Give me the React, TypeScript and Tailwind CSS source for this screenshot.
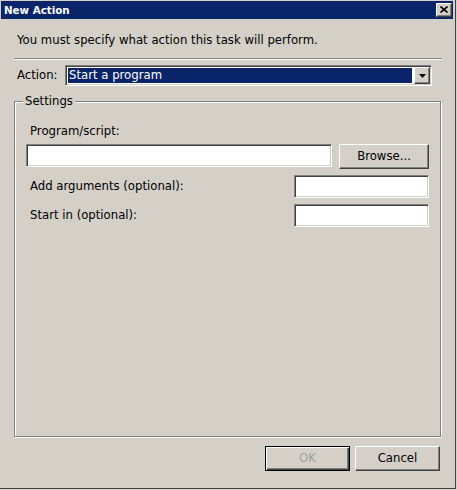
import React from 'react'

// classic win2k-style 3d edges
const raised = "border border-t-white border-l-white border-b-[#404040] border-r-[#404040] shadow-[inset_-1px_-1px_0_#808080]";
const sunken = "border border-t-[#808080] border-l-[#808080] border-b-white border-r-white shadow-[inset_1px_1px_0_#404040,inset_-1px_-1px_0_#d4d0c8]";

function TextBox({ className }: { className: string }) {
  return <div className={`bg-white ${sunken} ${className}`} />;
}

function PushButton({ label, isDefault, disabled, className }: { label: string; isDefault?: boolean; disabled?: boolean; className: string }) {
  if (isDefault) {
    return (
      <div className={`flex items-center justify-center border border-black shadow-[inset_1px_1px_0_#fff,inset_-1px_-1px_0_#404040,inset_-2px_-2px_0_#808080] ${className}`}>
        <span className={disabled ? "text-[#a0a0a0]" : "text-black"}>{label}</span>
      </div>
    );
  }
  return (
    <div className={`flex items-center justify-center ${raised} ${className}`}>
      <span className={disabled ? "text-[#a0a0a0]" : "text-black"}>{label}</span>
    </div>
  );
}

export default function App() {
  return (
    <div className="w-[457px] h-[490px] bg-[#d4d0c8] font-['DejaVu_Sans',sans-serif] text-[11.7px] leading-[13px] text-black">
      <div className="w-[456px] h-[489px] border-r border-b border-[#404040] flex flex-col">
        {/* title bar */}
        <div className="ml-px mt-px w-[452px] h-[18px] bg-[#0a246a] flex items-center justify-between pl-[3px] pr-px">
          <span className="text-white font-bold text-[10.3px]">New Action</span>
          <div className={`w-[16px] h-[14px] bg-[#d4d0c8] flex items-center justify-center ${raised}`}>
            <svg width="8" height="7" viewBox="0 0 8 7" className="-ml-px -mt-px">
              <path d="M0.5 0.5 L7.5 6.5 M7.5 0.5 L0.5 6.5" stroke="#000" strokeWidth="1.6" fill="none" />
            </svg>
          </div>
        </div>

        <div className="ml-[17px] mt-[15px] h-[13px]">You must specify what action this task will perform.</div>

        <div className="ml-[14px] mt-[11px] w-[428px] h-[2px] border-t border-[#808080] border-b border-b-white" />

        <div className="mt-[5px] flex items-center h-[21px]">
          <span className="ml-[17px] w-[48px]">Action:</span>
          <div className={`w-[367px] h-[21px] bg-white flex ${sunken} p-px`}>
            <div className="flex-1 bg-[#0a246a] text-white flex items-center pl-[1px] m-px mr-[2px]">
              Start a program
            </div>
            <div className={`w-[16px] h-full bg-[#d4d0c8] flex items-center justify-center ${raised}`}>
              <svg width="7" height="4" viewBox="0 0 7 4">
                <polygon points="0,0 7,0 3.5,4" fill="#000" />
              </svg>
            </div>
          </div>
        </div>

        {/* settings group */}
        <div className="relative ml-[14px] mt-[15px] w-[427px] h-[336px] border border-[#808080] shadow-[inset_1px_1px_0_#fff,1px_1px_0_#fff] flex flex-col px-[11px]">
          <span className="absolute left-[8px] -top-[7px] bg-[#d4d0c8] px-[2px]">Settings</span>

          <span className="ml-[4px] mt-[23px] h-[13px]">Program/script:</span>
          <div className="mt-[6px] flex items-start gap-[7px]">
            <TextBox className="w-[306px] h-[23px]" />
            <PushButton label="Browse..." className="w-[90px] h-[25px]" />
          </div>

          <div className="mt-[6px] flex items-center justify-between h-[23px]">
            <span className="ml-[4px]">Add arguments (optional):</span>
            <TextBox className="w-[135px] h-[23px]" />
          </div>
          <div className="mt-[6px] flex items-center justify-between h-[23px]">
            <span className="ml-[4px]">Start in (optional):</span>
            <TextBox className="w-[135px] h-[23px]" />
          </div>
        </div>

        <div className="mt-[9px] flex justify-end gap-[5px] pr-[15px]">
          <PushButton label="OK" isDefault disabled className="w-[85px] h-[25px]" />
          <PushButton label="Cancel" className="w-[85px] h-[25px]" />
        </div>
      </div>
    </div>
  );
}
